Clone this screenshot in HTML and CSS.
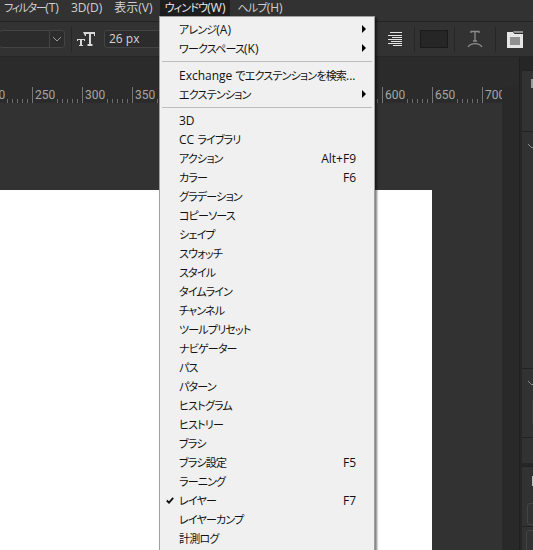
FILE: index.html
```html
<!DOCTYPE html>
<html lang="ja">
<head>
<meta charset="utf-8">
<title>Window menu</title>
<link rel="stylesheet" href="styles.css">
</head>
<body>
<div class="app">
  <nav class="menubar">
    <span class="top-item top-tight">フィルター<b>(T)</b></span>
    <span class="top-item"><b>3D(D)</b></span>
    <span class="top-item top-kanji">表示<b>(V)</b></span>
    <span class="top-item is-open">ウィンドウ<b>(W)</b></span>
    <span class="top-item">ヘルプ<b>(H)</b></span>
  </nav>
  <div class="options">
    <div class="font-select"><span class="select-arrow"><svg width="10" height="6" viewBox="0 0 10 6"><path d="M1 1l4 4 4-4" fill="none" stroke="#9a9a9a"/></svg></span></div>
    <span class="vsep"></span>
    <svg class="tt-icon" width="18" height="16" viewBox="0 0 18 16"><path d="M0 8h8v2h-1v-1h-2v5h1v1h-4v-1h1v-5h-2v1h-1zM6 1h12v4h-1v-2h-3v10h1.500v2h-5v-2h1.500v-10h-3v2h-1z" fill="#d8d8d8"/></svg>
    <div class="size-field">26 px</div>
    <div class="options-right">
      <svg class="align-icon" width="14" height="14" viewBox="0 0 14 14"><path d="M2 .5h12M0 3.500h14M4 5.500h10M0 7.500h14M3 9.500h11M0 11.500h14M5 13.500h9" stroke="#e2e2e2" fill="none"/></svg>
      <span class="vsep"></span>
      <span class="swatch"></span>
      <span class="vsep"></span>
      <svg class="warp-icon" width="16" height="18" viewBox="0 0 16 18"><path d="M4 3V1.500h8V3M8 1.500V11M6 11h4M1 17c3-4.500 11-4.500 14 0" fill="none" stroke="#8c8c8c" stroke-width="1.300"/></svg>
      <span class="vsep"></span>
      <svg class="panel-icon" width="16" height="17" viewBox="0 0 16 17"><path d="M0 1h6l1.500 2H16v14H0z" fill="#e6e6e6"/><path d="M6 0h10v2H7.500z" fill="#8f8f8f"/><path d="M3 7h10M3 9h10M3 11h10M3 13h10" stroke="#3a3a3a"/></svg>
    </div>
  </div>
  <div class="body">
    <div class="doc">
      <div class="tabstrip"></div>
      <div class="ruler">
        <span class="ruler-cell"><span class="ruler-label">200</span></span>
        <span class="ruler-cell"><span class="ruler-label">250</span></span>
        <span class="ruler-cell"><span class="ruler-label">300</span></span>
        <span class="ruler-cell"><span class="ruler-label">350</span></span>
        <span class="ruler-cell"><span class="ruler-label">400</span></span>
        <span class="ruler-cell"><span class="ruler-label">450</span></span>
        <span class="ruler-cell"><span class="ruler-label">500</span></span>
        <span class="ruler-cell"><span class="ruler-label">550</span></span>
        <span class="ruler-cell"><span class="ruler-label">600</span></span>
        <span class="ruler-cell"><span class="ruler-label">650</span></span>
        <span class="ruler-cell"><span class="ruler-label">700</span></span>
      </div>
      <div class="workspace"><div class="canvas"></div></div>
    </div>
    <aside class="dock">
      <div class="panel panel-a"><span class="panel-glyph"></span></div>
      <div class="panel panel-b"><svg class="chev" width="8" height="5" viewBox="0 0 8 5"><path d="M0 0l4 4 4-4" fill="none" stroke="#888"/></svg></div>
      <div class="panel panel-c"><svg class="chev" width="8" height="5" viewBox="0 0 8 5"><path d="M0 0l4 4 4-4" fill="none" stroke="#888"/></svg><span class="dark-box"></span></div>
      <div class="panel panel-d"></div>
      <div class="panel panel-e"><span class="light-chip"></span><span class="round-box"></span></div>
      <div class="panel panel-f"><span class="round-box"></span></div>
    </aside>
  </div>

  <div class="menu">
    <div class="item"><span>アレンジ<b>(A)</b></span><i class="arrow"></i></div>
    <div class="item"><span>ワークスペース<b>(K)</b></span><i class="arrow"></i></div>
    <hr class="sep">
    <div class="item"><span><b>Exchange </b>でエクステンションを検索<b>...</b></span></div>
    <div class="item"><span>エクステンション</span><i class="arrow"></i></div>
    <hr class="sep sep-tight">
    <div class="item"><span><b>3D</b></span></div>
    <div class="item"><span><b>CC </b>ライブラリ</span></div>
    <div class="item"><span>アクション</span><kbd>Alt+F9</kbd></div>
    <div class="item"><span>カラー</span><kbd>F6</kbd></div>
    <div class="item"><span>グラデーション</span></div>
    <div class="item"><span>コピーソース</span></div>
    <div class="item"><span>シェイプ</span></div>
    <div class="item"><span>スウォッチ</span></div>
    <div class="item"><span>スタイル</span></div>
    <div class="item"><span>タイムライン</span></div>
    <div class="item"><span>チャンネル</span></div>
    <div class="item"><span>ツールプリセット</span></div>
    <div class="item"><span>ナビゲーター</span></div>
    <div class="item"><span>パス</span></div>
    <div class="item"><span>パターン</span></div>
    <div class="item"><span>ヒストグラム</span></div>
    <div class="item"><span>ヒストリー</span></div>
    <div class="item"><span>ブラシ</span></div>
    <div class="item"><span>ブラシ設定</span><kbd>F5</kbd></div>
    <div class="item"><span>ラーニング</span></div>
    <div class="item"><svg class="check" width="8" height="7" viewBox="0 0 8 7"><path d="M.8 3.500l2.200 2.200L7.200.8" fill="none" stroke="#111" stroke-width="1.800"/></svg><span>レイヤー</span><kbd>F7</kbd></div>
    <div class="item"><span>レイヤーカンプ</span></div>
    <div class="item"><span>計測ログ</span></div>
  </div>
</div>
</body>
</html>
```
FILE: styles.css
```css
* { box-sizing: border-box; }
html, body { margin: 0; height: 100%; overflow: hidden; background: #323232; }
body { font-family: "Open Sans", "Noto Sans CJK JP", sans-serif; font-size: 12px; }

.app { position: relative; display: flex; flex-direction: column; height: 550px; overflow: hidden; }

/* Latin runs stay at 12px; kana are set smaller and tighter to mimic the narrow UI font */
.top-item b, .item b, .item kbd { font-family: "Open Sans", sans-serif; font-size: 12px; font-weight: 400; letter-spacing: 0; }

.menubar { display: flex; gap: 2px; height: 22px; margin-left: -1px; padding-bottom: 6px; background: #323232; border-bottom: 1px solid #232323; color: #d0d0d0; font-feature-settings: "palt"; flex: none; }
.top-item { display: flex; align-items: center; height: 16px; padding: 0 5px; font-size: 11px; letter-spacing: -.8px; line-height: 16px; white-space: nowrap; }
.top-tight { letter-spacing: -1.4px; }
.top-kanji { font-size: 12px; letter-spacing: 0; }
.top-item.is-open { background: #1e1e1e; color: #e8e8e8; }

.options { display: flex; align-items: center; height: 35px; background: #323232; border-bottom: 1px solid #262626; flex: none; }
.font-select { display: flex; justify-content: flex-end; width: 66px; height: 18px; margin-left: -1px; background: #2c2c2c; border: 1px solid #444; border-radius: 3px; }
.select-arrow { display: flex; align-items: center; justify-content: center; width: 15px; border-left: 1px solid #444; }
.vsep { width: 1px; height: 25px; background: #262626; flex: none; }
.font-select + .vsep { margin-left: 6px; }
.tt-icon { margin-left: 5px; }
.size-field { width: 60px; height: 18px; margin-left: 9px; padding-left: 4px; background: #2c2c2c; border: 1px solid #444; border-radius: 3px; color: #d4d4d4; font-size: 12px; line-height: 16px; }
.options-right { display: flex; align-items: center; margin-left: auto; margin-right: 10px; }
.align-icon { margin-right: 12px; }
.swatch { width: 28px; height: 18px; margin: 0 6px 0 5px; background: #262626; border: 1px solid #1a1a1a; }
.warp-icon { margin: 0 12px; }
.panel-icon { margin-left: 11px; margin-right: 0; }

.body { display: flex; flex: 1; min-height: 0; }
.doc { display: flex; flex-direction: column; flex: none; width: 519px; background: #292929; }
.tabstrip { height: 30px; flex: none; background: #2b2b2b; }
.ruler { display: flex; width: 502px; height: 16px; flex: none; overflow: hidden; background: #2b2b2b; }
.ruler-cell { flex: none; display: block; width: 50px; height: 16px; border-left: 1px solid #777; background: repeating-linear-gradient(90deg, transparent 0 4px, #6c6c6c 4px 5px) bottom left / 100% 4px no-repeat; }
.ruler-cell:first-child { margin-left: -18px; }
.ruler-label { display: block; width: max-content; padding: 0 1px 0 2px; background: #2b2b2b; color: #a6a6a6; font-family: Roboto, sans-serif; font-size: 12px; line-height: 16px; }
.workspace { flex: 1; width: 502px; background: #323232; padding-top: 87px; }
.canvas { width: 432px; height: 100%; background: #fff; }

.dock { flex: 1; display: flex; flex-direction: column; padding: 13px 0 0 2px; background: #262626; border-left: 1px solid #1f1f1f; }
.panel { position: relative; flex: none; background: #323232; border-top: 1px solid #232323; overflow: hidden; padding-left: 6px; }
.panel-a { height: 61px; padding-top: 8px; }
.panel-glyph { display: block; width: 4px; height: 9px; margin-left: 3px; background: #999; }
.panel-b { height: 237px; padding-top: 12px; }
.panel-c { height: 69px; padding-top: 12px; }
.panel-d { height: 26px; margin-bottom: 3px; }
.panel-e { height: 60px; padding-top: 9px; }
.panel-f { height: 30px; padding: 3px 0 0 5px; }
.chev { display: block; }
.dark-box { display: block; width: 10px; height: 24px; margin: 14px 0 0 4px; background: #222; border: 1px solid #3c3c3c; }
.light-chip { display: block; width: 4px; height: 10px; margin-left: 4px; background: #bdbdbd; }
.round-box { display: block; width: 20px; height: 22px; margin: 17px 0 0 -1px; border: 1px solid #444; border-radius: 3px; }
.panel-f .round-box { margin-top: 0; }

.menu { position: absolute; left: 159px; top: 16px; width: 216px; height: 560px; padding-top: 3px; background: #f0f0f0; border: 1px solid #a0a0a0; box-shadow: 2px 2px 2px rgba(0, 0, 0, .5); color: #111; font-feature-settings: "palt"; }
.item { position: relative; display: flex; align-items: center; justify-content: space-between; height: 19px; padding: 0 18px 0 19px; font-size: 11px; letter-spacing: -.8px; line-height: 19px; white-space: nowrap; }
.sep { height: 1px; margin: 3px 2px 4px 2px; border: 0; background: #bdbdbd; }
.sep-tight { margin-bottom: 3px; }
.arrow { position: absolute; right: 8px; top: 5px; width: 0; height: 0; border-left: 4px solid #000; border-top: 4px solid transparent; border-bottom: 4px solid transparent; }
.check { position: absolute; left: 6px; top: 6px; }
```
